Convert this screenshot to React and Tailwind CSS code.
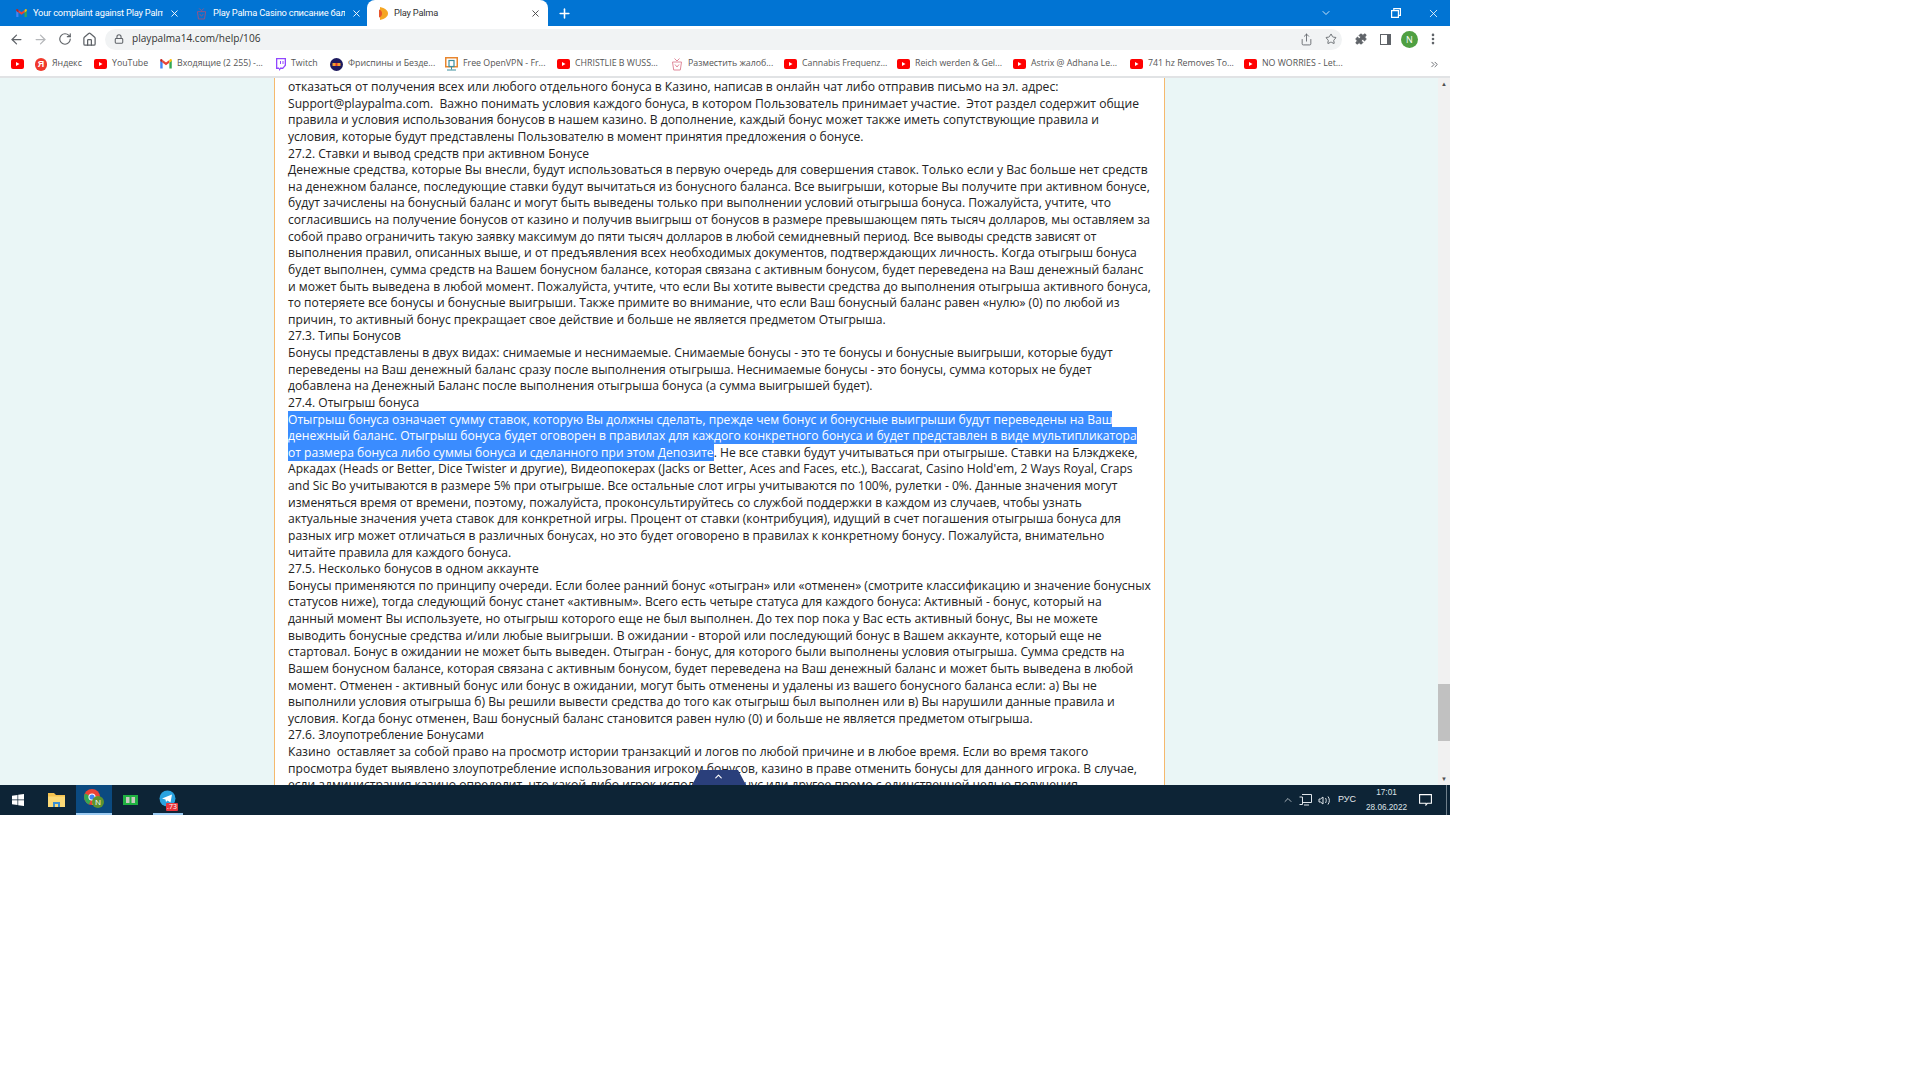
// App.jsx
import React from "react";
import { ArrowLeft, ArrowRight, RotateCw, Home, Lock, Share, Star, X, Plus, ChevronDown, ChevronUp, ChevronsRight, EllipsisVertical, Puzzle } from "lucide-react";

const contentLines = [
  "отказаться от получения всех или любого отдельного бонуса в Казино, написав в онлайн чат либо отправив письмо на эл. адрес:",
  "Support@playpalma.com.  Важно понимать условия каждого бонуса, в котором Пользователь принимает участие.  Этот раздел содержит общие",
  "правила и условия использования бонусов в нашем казино. В дополнение, каждый бонус может также иметь сопутствующие правила и",
  "условия, которые будут представлены Пользователю в момент принятия предложения о бонусе.",
  "27.2. Ставки и вывод средств при активном Бонусе",
  "Денежные средства, которые Вы внесли, будут использоваться в первую очередь для совершения ставок. Только если у Вас больше нет средств",
  "на денежном балансе, последующие ставки будут вычитаться из бонусного баланса. Все выигрыши, которые Вы получите при активном бонусе,",
  "будут зачислены на бонусный баланс и могут быть выведены только при выполнении условий отыгрыша бонуса. Пожалуйста, учтите, что",
  "согласившись на получение бонусов от казино и получив выигрыш от бонусов в размере превышающем пять тысяч долларов, мы оставляем за",
  "собой право ограничить такую заявку максимум до пяти тысяч долларов в любой семидневный период. Все выводы средств зависят от",
  "выполнения правил, описанных выше, и от предъявления всех необходимых документов, подтверждающих личность. Когда отыгрыш бонуса",
  "будет выполнен, сумма средств на Вашем бонусном балансе, которая связана с активным бонусом, будет переведена на Ваш денежный баланс",
  "и может быть выведена в любой момент. Пожалуйста, учтите, что если Вы хотите вывести средства до выполнения отыгрыша активного бонуса,",
  "то потеряете все бонусы и бонусные выигрыши. Также примите во внимание, что если Ваш бонусный баланс равен «нулю» (0) по любой из",
  "причин, то активный бонус прекращает свое действие и больше не является предметом Отыгрыша.",
  "27.3. Типы Бонусов",
  "Бонусы представлены в двух видах: снимаемые и неснимаемые. Снимаемые бонусы - это те бонусы и бонусные выигрыши, которые будут",
  "переведены на Ваш денежный баланс сразу после выполнения отыгрыша. Неснимаемые бонусы - это бонусы, сумма которых не будет",
  "добавлена на Денежный Баланс после выполнения отыгрыша бонуса (а сумма выигрышей будет).",
  "27.4. Отыгрыш бонуса",
  { sel: "Отыгрыш бонуса означает сумму ставок, которую Вы должны сделать, прежде чем бонус и бонусные выигрыши будут переведены на Ваш" },
  { sel: "денежный баланс. Отыгрыш бонуса будет оговорен в правилах для каждого конкретного бонуса и будет представлен в виде мультипликатора" },
  { sel: "от размера бонуса либо суммы бонуса и сделанного при этом Депозите", rest: ". Не все ставки будут учитываться при отыгрыше. Ставки на Блэкджеке," },
  "Аркадах (Heads or Better, Dice Twister и другие), Видеопокерах (Jacks or Better, Aces and Faces, etc.), Baccarat, Casino Hold'em, 2 Ways Royal, Craps",
  "and Sic Bo учитываются в размере 5% при отыгрыше. Все остальные слот игры учитываются по 100%, рулетки - 0%. Данные значения могут",
  "изменяться время от времени, поэтому, пожалуйста, проконсультируйтесь со службой поддержки в каждом из случаев, чтобы узнать",
  "актуальные значения учета ставок для конкретной игры. Процент от ставки (контрибуция), идущий в счет погашения отыгрыша бонуса для",
  "разных игр может отличаться в различных бонусах, но это будет оговорено в правилах к конкретному бонусу. Пожалуйста, внимательно",
  "читайте правила для каждого бонуса.",
  "27.5. Несколько бонусов в одном аккаунте",
  "Бонусы применяются по принципу очереди. Если более ранний бонус «отыгран» или «отменен» (смотрите классификацию и значение бонусных",
  "статусов ниже), тогда следующий бонус станет «активным». Всего есть четыре статуса для каждого бонуса: Активный - бонус, который на",
  "данный момент Вы используете, но отыгрыш которого еще не был выполнен. До тех пор пока у Вас есть активный бонус, Вы не можете",
  "выводить бонусные средства и/или любые выигрыши. В ожидании - второй или последующий бонус в Вашем аккаунте, который еще не",
  "стартовал. Бонус в ожидании не может быть выведен. Отыгран - бонус, для которого были выполнены условия отыгрыша. Сумма средств на",
  "Вашем бонусном балансе, которая связана с активным бонусом, будет переведена на Ваш денежный баланс и может быть выведена в любой",
  "момент. Отменен - активный бонус или бонус в ожидании, могут быть отменены и удалены из вашего бонусного баланса если: а) Вы не",
  "выполнили условия отыгрыша б) Вы решили вывести средства до того как отыгрыш был выполнен или в) Вы нарушили данные правила и",
  "условия. Когда бонус отменен, Ваш бонусный баланс становится равен нулю (0) и больше не является предметом отыгрыша.",
  "27.6. Злоупотребление Бонусами",
  "Казино  оставляет за собой право на просмотр истории транзакций и логов по любой причине и в любое время. Если во время такого",
  "просмотра будет выявлено злоупотребление использования игроком бонусов, казино в праве отменить бонусы для данного игрока. В случае,",
  "если администрация казино определит, что какой-либо игрок использует бонус или другое промо с единственной целью получения",
];

const YoutubeIcon = () => (
  <svg width="13" height="10" viewBox="0 0 13 10" className="shrink-0">
    <rect width="13" height="10" rx="2" fill="#f00" />
    <path d="M5 3l3.5 2L5 7z" fill="#fff" />
  </svg>
);

const GmailIcon = ({ size = 12 }) => (
  <svg width={size} height={size * 0.8} viewBox="0 0 12 10" className="shrink-0">
    <path d="M0 1v9h2.5V4z" fill="#4285f4" />
    <path d="M12 1v9H9.5V4z" fill="#34a853" />
    <path d="M2.5 4L6 6.6 9.5 4V1L6 3.6 2.5 1z" fill="#ea4335" />
    <path d="M0 1.2C0 0 1.6-.4 2.5 1v3L0 2.2z" fill="#c5221f" />
    <path d="M12 1.2C12 0 10.4-.4 9.5 1v3L12 2.2z" fill="#fbbc04" />
  </svg>
);

const YandexIcon = () => (
  <span className="w-[12px] h-[13px] rounded-full bg-[#f0392b] text-white text-[9px] leading-[13px] font-bold text-center shrink-0 font-['Liberation_Sans',sans-serif]">Я</span>
);

const TwitchIcon = () => (
  <svg width="11" height="13" viewBox="0 0 11 13" className="shrink-0">
    <path d="M1 0h10v7.5L8 11H5.8L4 13V11H1z" fill="#9146ff" />
    <path d="M2.3 1.2h7.4v5.8L7.7 9.6H5.2L4 10.8V9.6H2.3z" fill="#fff" />
    <path d="M5 3h1v3H5zM7.5 3h1v3h-1z" fill="#9146ff" />
  </svg>
);

const FreespinIcon = () => (
  <svg width="13" height="13" viewBox="0 0 13 13" className="shrink-0">
    <circle cx="6.5" cy="6.5" r="6.5" fill="#1d1a5e" />
    <rect x="2.5" y="5" width="8" height="3" fill="#f0a030" />
    <rect x="5.5" y="5" width="2" height="3" fill="#e0352b" />
  </svg>
);

const VpnIcon = () => (
  <svg width="13" height="14" viewBox="0 0 13 14" className="shrink-0">
    <rect x=".75" y=".75" width="11.5" height="9" fill="none" stroke="#e8862e" strokeWidth="1.5" />
    <rect x="4" y="3.5" width="5" height="6" fill="none" stroke="#3d8f9e" strokeWidth="1.2" />
    <path d="M6.5 10v2.5M2 13h9" stroke="#3d8f9e" strokeWidth="1" />
  </svg>
);

const GiftIcon = ({ size = 12, stroke = "#e08a9c" }) => (
  <svg width={size} height={size + 2} viewBox="0 0 12 14" fill="none" stroke={stroke} strokeWidth="1" className="shrink-0">
    <path d="M3.5 1.5L6 4l2.5-2.5M1.5 5h9l-1.2 8H2.700z" />
    <path d="M4 7.5l2 2.500 2-2.500" />
  </svg>
);

const bookmarks = [
  { icon: <YoutubeIcon />, label: null, cls: "w-[24px]" },
  { icon: <YandexIcon />, label: "Яндекс", cls: "w-[59px]" },
  { icon: <YoutubeIcon />, label: "YouTube", cls: "w-[66px]" },
  { icon: <GmailIcon />, label: "Входящие (2 255) -...", cls: "w-[115px]" },
  { icon: <TwitchIcon />, label: "Twitch", cls: "w-[55px]" },
  { icon: <FreespinIcon />, label: "Фриспины и Бездe...", cls: "w-[115px]" },
  { icon: <VpnIcon />, label: "Free OpenVPN - Fr...", cls: "w-[112px]" },
  { icon: <YoutubeIcon />, label: "CHRISTLIE B WUSS...", cls: "w-[114px]" },
  { icon: <GiftIcon />, label: "Разместить жалоб...", cls: "w-[113px]" },
  { icon: <YoutubeIcon />, label: "Cannabis Frequenz...", cls: "w-[113px]" },
  { icon: <YoutubeIcon />, label: "Reich werden & Gel...", cls: "w-[116px]" },
  { icon: <YoutubeIcon />, label: "Astrix @ Adhana Le...", cls: "w-[117px]" },
  { icon: <YoutubeIcon />, label: "741 hz Removes To...", cls: "w-[114px]" },
  { icon: <YoutubeIcon />, label: "NO WORRIES - Let...", cls: "w-[100px]" },
];

function Tab({ icon, title, boxCls, active }) {
  return (
    <div className={`relative flex items-center h-[26px] gap-[6px] shrink-0 ${boxCls} ${active ? "bg-white rounded-t-[8px] text-[#333]" : "text-white"}`}>
      {icon}
      <span className="flex-1 overflow-hidden whitespace-nowrap text-[9.3px] tracking-[-0.2px] font-['Roboto',sans-serif]">{title}</span>
      <X size={11} strokeWidth={2} className={active ? "text-[#444]" : "text-white"} />
    </div>
  );
}

function ChromeIcon() {
  return (
    <svg width="22" height="22" viewBox="0 0 22 22">
      <circle cx="9" cy="9" r="8" fill="#ea4335" />
      <path d="M9 9L2 5.5A8 8 0 0 0 6 16.5z" fill="#34a853" />
      <path d="M9 9l7-1a8 8 0 0 1-7 9z" fill="#fbbc04" />
      <circle cx="9" cy="9" r="3.6" fill="#fff" />
      <circle cx="9" cy="9" r="2.6" fill="#4285f4" />
      <circle cx="15" cy="14" r="6" fill="#5d9330" />
      <text x="15" y="17" fontSize="8" fill="#fff" textAnchor="middle" fontFamily="Open Sans, sans-serif">N</text>
    </svg>
  );
}

export default function App() {
  return (
    <div className="min-h-screen w-full bg-white font-['Open_Sans',sans-serif]">
      <div className="relative w-[1450px] h-[815px] flex flex-col overflow-hidden">
        {/* Tab strip */}
        <div className="h-[26px] bg-[#0174d3] flex items-center pl-[8px] shrink-0">
          <Tab boxCls="w-[181px] pl-[8px] pr-[9px]" title="Your complaint against Play Palm" icon={<GmailIcon size={11} />} />
          <Tab boxCls="w-[178px] pl-[7px] pr-[5px]" title="Play Palma Casino списание бал" icon={<GiftIcon size={11} stroke="#a0527e" />} />
          <Tab
            active
            boxCls="w-[181px] pl-[10px] pr-[7px]"
            title="Play Palma"
            icon={
              <svg width="11" height="13" viewBox="0 0 11 13" className="shrink-0">
                <path d="M3 0c5 1 8 3.500 8 6.500S8 12 3 13z" fill="#f5a623" />
                <path d="M2 2.500c2 .5 3 2 3 4s-1 3.500-3 4z" fill="#e8552b" />
              </svg>
            }
          />
          <Plus size={15} strokeWidth={2.5} className="text-white ml-[9px]" />
          <div className="flex-1" />
          <ChevronDown size={12} className="text-[#cfe4f6] mr-[59px]" />
          <svg width="10" height="10" viewBox="0 0 10 10" fill="none" stroke="#fff" strokeWidth="1.2" className="mr-[26px]">
            <path d="M.6 2.600h6.800v6.800H.6zM2.800 2.600V.6h6.600v6.800H7.400" />
          </svg>
          <X size={13} strokeWidth={1.5} className="text-white mr-[10px]" />
        </div>

        {/* Toolbar */}
        <div className="h-[26px] bg-white flex items-center shrink-0 text-[#5f6368]">
          <ArrowLeft size={15} strokeWidth={2} className="ml-[9px]" />
          <ArrowRight size={15} strokeWidth={2} className="ml-[9px] text-[#b5b7ba]" />
          <RotateCw size={14} strokeWidth={2} className="ml-[10px]" />
          <Home size={15} strokeWidth={2} className="ml-[10px]" />
          <div className="ml-[8px] w-[1237px] h-[21px] rounded-full bg-[#f1f3f4] flex items-center pl-[9px] pr-[5px]">
            <Lock size={10} strokeWidth={2.5} className="text-[#5f6368]" />
            <span className="ml-[8px] text-[10.1px] text-[#333]">playpalma14.com/help/106</span>
            <div className="flex-1" />
            <Share size={13} strokeWidth={1.6} className="mr-[12px]" />
            <Star size={12} strokeWidth={1.8} />
          </div>
          <Puzzle size={12} strokeWidth={2} className="ml-[13px] text-[#5f6368] fill-[#5f6368]" />
          <div className="ml-[13px] w-[11px] h-[11px] border-[1.5px] border-[#5f6368] border-r-[4px]" />
          <div className="ml-[10px] w-[17px] h-[17px] rounded-full bg-[#4fa042] text-white text-[9px] leading-[17px] text-center">N</div>
          <EllipsisVertical size={14} strokeWidth={2.5} className="ml-[8px]" />
        </div>

        {/* Bookmarks bar */}
        <div className="h-[26px] bg-white border-b-[2px] border-[#e1e3e5] flex items-center pl-[11px] shrink-0">
          {bookmarks.map((b, i) => (
            <div key={i} className={`flex items-center gap-[5px] shrink-0 overflow-hidden ${b.cls}`}>
              {b.icon}
              {b.label && <span className="text-[8.8px] text-[#555] whitespace-nowrap">{b.label}</span>}
            </div>
          ))}
          <div className="flex-1" />
          <ChevronsRight size={11} strokeWidth={2} className="text-[#5f6368] mr-[10px]" />
        </div>

        {/* Page */}
        <div className="flex-1 min-h-0 flex">
          <div className="w-[274px] bg-[#eaf6f6]" />
          <div className="w-[891px] bg-white border-x border-[#f5b96d] pl-[13px] overflow-hidden">
            <div className="text-[12.1px] leading-[16.63px] text-[#222] whitespace-pre pt-[1px]">
              {contentLines.map((line, i) =>
                typeof line === "string" ? (
                  <div key={i} className="h-[16.63px]">{line}</div>
                ) : (
                  <div key={i} className="h-[16.63px]">
                    <span className="bg-[#3a8cff] text-white">{line.sel}</span>
                    {line.rest}
                  </div>
                )
              )}
            </div>
          </div>
          <div className="flex-1 bg-[#eaf6f6]" />
          <div className="w-[12px] bg-[#f1f1f1] flex flex-col items-center">
            <div className="h-[12px] flex items-center justify-center text-[#505050] text-[6px] leading-none">▲</div>
            <div className="flex-1 w-full pt-[594px]">
              <div className="h-[57px] bg-[#c1c1c1]" />
            </div>
            <div className="h-[12px] flex items-center justify-center text-[#505050] text-[6px] leading-none">▼</div>
          </div>
        </div>

        {/* Taskbar */}
        <div className="h-[30px] bg-[#0d2436] flex items-center shrink-0 text-white">
          <svg width="12" height="12" viewBox="0 0 12 12" className="ml-[12px]" fill="#fff">
            <path d="M0 1.700L5.500.9v4.700H0zM6.200.8L12 0v5.600H6.200zM0 6.300h5.500v4.800L0 10.300zM6.200 6.300H12V12l-5.800-.8z" />
          </svg>
          <svg width="17" height="14" viewBox="0 0 17 14" className="ml-[24px]">
            <path d="M0 0h6l2 2h9v12H0z" fill="#f3c14f" />
            <rect y="3.500" width="17" height="10.500" fill="#fbd976" />
            <path d="M5 9h7v5h-2v-3H7v3H5z" fill="#3d8fd1" />
          </svg>
          <div className="ml-[11px] w-[36px] h-full bg-[#0b4a80] border-b-2 border-[#9ccbf2] flex items-center justify-center">
            <ChromeIcon />
          </div>
          <svg width="15" height="10" viewBox="0 0 15 10" className="ml-[11px]">
            <rect width="15" height="10" fill="#1fb141" />
            <rect x="3" y="2" width="3.500" height="6" fill="#c9c9c0" />
            <rect x="8.500" y="2" width="3.500" height="6" fill="#c9c9c0" />
          </svg>
          <div className="relative ml-[15px] w-[30px] h-full border-b-2 border-[#9ccbf2] flex items-center justify-center">
            <svg width="17" height="17" viewBox="0 0 17 17" className="-translate-x-[1px] -translate-y-[1px]">
              <circle cx="8.500" cy="8.500" r="8" fill="#2aa3e0" />
              <path d="M3 8.500l10-4-1.500 8-3-2-1.500 1.500-.5-2.500z" fill="#fff" />
            </svg>
            <span className="absolute right-[5px] bottom-[2px] h-[8px] w-[12px] bg-[#e8343c] text-[7px] leading-[8px] text-center rounded-[1px]">.73</span>
          </div>
          <div className="flex-1" />
          <ChevronUp size={12} strokeWidth={1.5} className="text-[#dfe5ea] mr-[5px]" />
          <svg width="13" height="12" viewBox="0 0 13 12" fill="none" stroke="#dfe5ea" strokeWidth="1" className="mr-[6px]">
            <path d="M3 .5h9.500v8H3M.5 3h3v7.500h-3M5 11h5" />
          </svg>
          <svg width="12" height="11" viewBox="0 0 12 11" fill="none" stroke="#dfe5ea" strokeWidth="1" className="mr-[8px]">
            <path d="M1 4v3h1.500L5 9V2L2.500 4zM7.500 3c1 1.500 1 3.500 0 5M10 1.500c1.800 2.500 1.800 5.500 0 8" />
          </svg>
          <span className="text-[9px] text-[#e6eaee] mr-[10px] font-['Liberation_Sans',sans-serif]">РУС</span>
          <div className="flex flex-col items-center text-[8.2px] leading-[15px] text-[#dfe5ea] mr-[12px] font-['Liberation_Sans',sans-serif]">
            <span>17:01</span>
            <span>28.06.2022</span>
          </div>
          <svg width="13" height="12" viewBox="0 0 13 12" fill="none" stroke="#fff" strokeWidth="1.1" className="mr-[14px]">
            <path d="M.6.600h11.800v8.600H8.500L7 11V9.200H.6z" />
          </svg>
          <div className="w-[1px] h-full bg-[#6f7f8b] mr-[3px]" />
        </div>

        {/* Scroll-to-top tab over the page */}
        <div className="absolute left-[692px] top-[770px] w-[54px] h-[15px]">
          <svg width="54" height="15" viewBox="0 0 54 15" className="absolute inset-0">
            <path d="M8 0h38l8 15H0z" fill="#2a3f7b" />
          </svg>
          <ChevronUp size={11} strokeWidth={2.5} className="absolute left-[21px] top-[1px] text-white" />
        </div>
      </div>
    </div>
  );
}
